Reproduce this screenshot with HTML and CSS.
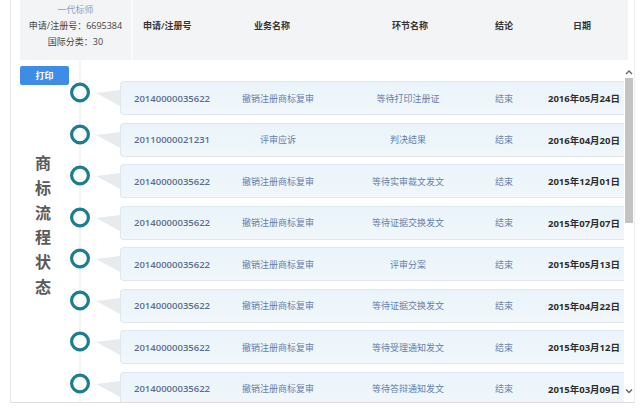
FILE: index.html
```html
<!DOCTYPE html>
<html lang="zh">
<head>
<meta charset="utf-8">
<link rel="stylesheet" href="styles.css">
</head>
<body>
<div class="frame">
  <div class="head">
    <div class="info">
      <div class="brand">一代标师</div>
      <div>申请/注册号：6695384</div>
      <div>国际分类：30</div>
    </div>
    <div class="titles">
      <div class="t t1">申请/注册号</div>
      <div class="t">业务名称</div>
      <div class="t">环节名称</div>
      <div class="t">结论</div>
      <div class="t">日期</div>
    </div>
  </div>
  <div class="main">
    <div class="side">
      <div class="print">打印</div>
      <div class="vtext">商<br>标<br>流<br>程<br>状<br>态</div>
    </div>
    <div class="list">
      <div class="row"><svg class="node" width="51" height="34" viewBox="0 0 51 34"><polygon points="27,12 51,9 51,25" fill="#e7ebee"/><circle cx="11" cy="11.5" r="8.4" fill="#fff" stroke="#1b7d91" stroke-width="3.2"/></svg><div class="card"><span class="c1">20140000035622</span><span class="c2">撤销注册商标复审</span><span class="c3">等待打印注册证</span><span class="c4">结束</span><span class="c5">2016年05月24日</span></div></div>
      <div class="row"><svg class="node" width="51" height="34" viewBox="0 0 51 34"><polygon points="27,12 51,9 51,25" fill="#e7ebee"/><circle cx="11" cy="11.5" r="8.4" fill="#fff" stroke="#1b7d91" stroke-width="3.2"/></svg><div class="card"><span class="c1">20110000021231</span><span class="c2">评审应诉</span><span class="c3">判决结果</span><span class="c4">结束</span><span class="c5">2016年04月20日</span></div></div>
      <div class="row"><svg class="node" width="51" height="34" viewBox="0 0 51 34"><polygon points="27,12 51,9 51,25" fill="#e7ebee"/><circle cx="11" cy="11.5" r="8.4" fill="#fff" stroke="#1b7d91" stroke-width="3.2"/></svg><div class="card"><span class="c1">20140000035622</span><span class="c2">撤销注册商标复审</span><span class="c3">等待实审裁文发文</span><span class="c4">结束</span><span class="c5">2015年12月01日</span></div></div>
      <div class="row"><svg class="node" width="51" height="34" viewBox="0 0 51 34"><polygon points="27,12 51,9 51,25" fill="#e7ebee"/><circle cx="11" cy="11.5" r="8.4" fill="#fff" stroke="#1b7d91" stroke-width="3.2"/></svg><div class="card"><span class="c1">20140000035622</span><span class="c2">撤销注册商标复审</span><span class="c3">等待证据交换发文</span><span class="c4">结束</span><span class="c5">2015年07月07日</span></div></div>
      <div class="row"><svg class="node" width="51" height="34" viewBox="0 0 51 34"><polygon points="27,12 51,9 51,25" fill="#e7ebee"/><circle cx="11" cy="11.5" r="8.4" fill="#fff" stroke="#1b7d91" stroke-width="3.2"/></svg><div class="card"><span class="c1">20140000035622</span><span class="c2">撤销注册商标复审</span><span class="c3">评审分案</span><span class="c4">结束</span><span class="c5">2015年05月13日</span></div></div>
      <div class="row"><svg class="node" width="51" height="34" viewBox="0 0 51 34"><polygon points="27,12 51,9 51,25" fill="#e7ebee"/><circle cx="11" cy="11.5" r="8.4" fill="#fff" stroke="#1b7d91" stroke-width="3.2"/></svg><div class="card"><span class="c1">20140000035622</span><span class="c2">撤销注册商标复审</span><span class="c3">等待证据交换发文</span><span class="c4">结束</span><span class="c5">2015年04月22日</span></div></div>
      <div class="row"><svg class="node" width="51" height="34" viewBox="0 0 51 34"><polygon points="27,12 51,9 51,25" fill="#e7ebee"/><circle cx="11" cy="11.5" r="8.4" fill="#fff" stroke="#1b7d91" stroke-width="3.2"/></svg><div class="card"><span class="c1">20140000035622</span><span class="c2">撤销注册商标复审</span><span class="c3">等待受理通知发文</span><span class="c4">结束</span><span class="c5">2015年03月12日</span></div></div>
      <div class="row"><svg class="node" width="51" height="34" viewBox="0 0 51 34"><polygon points="27,12 51,9 51,25" fill="#e7ebee"/><circle cx="11" cy="11.5" r="8.4" fill="#fff" stroke="#1b7d91" stroke-width="3.2"/></svg><div class="card"><span class="c1">20140000035622</span><span class="c2">撤销注册商标复审</span><span class="c3">等待答辩通知发文</span><span class="c4">结束</span><span class="c5">2015年03月09日</span></div></div>
    </div>
    <div class="scroll">
      <svg class="arrow up" width="10" height="8" viewBox="0 0 10 8"><path d="M2 6 L5 3 L8 6" fill="none" stroke="#666" stroke-width="1.4"/></svg>
      <div class="track"><div class="thumb"></div></div>
      <svg class="arrow" width="10" height="8" viewBox="0 0 10 8"><path d="M2 2.5 L5 5.5 L8 2.5" fill="none" stroke="#666" stroke-width="1.4"/></svg>
    </div>
  </div>
</div>
</body>
</html>
```
FILE: styles.css
```css
html, body {
  margin: 0;
  padding: 0;
  background: #fff;
}
body {
  width: 640px;
  height: 409px;
  overflow: hidden;
  font-family: "Open Sans", "Noto Sans CJK SC", sans-serif;
  font-size: 9px;
  color: #333;
}
.frame {
  margin-left: 10px;
  width: 625px;
  height: 403px;
  border-left: 1px solid #e6e6e6;
  border-right: 1px solid #efefef;
  border-bottom: 1px solid #dedede;
  box-sizing: border-box;
  display: flex;
  flex-direction: column;
}
.head {
  margin-left: 9px;
  width: 608px;
  height: 60px;
  background: #f3f4f5;
  display: flex;
  flex-shrink: 0;
}
.info {
  width: 111px;
  border-right: 2px solid #fafafa;
  text-align: center;
  line-height: 16px;
  padding-top: 2px;
  color: #444;
}
.brand {
  color: #8d9ec2;
}
.titles {
  display: grid;
  grid-template-columns: 61px 156px 120px 68px 88px;
  padding-top: 18px;
  line-height: 16px;
  font-weight: 600;
  color: #333;
}
.t {
  text-align: center;
}
.t1 {
  text-align: left;
  padding-left: 10px;
  white-space: nowrap;
}
.main {
  flex: 1;
  display: flex;
  min-height: 0;
}
.side {
  width: 58px;
  flex-shrink: 0;
}
.print {
  margin: 6px 0 0 9px;
  width: 49px;
  height: 19px;
  line-height: 19px;
  background: #3d8de6;
  border-radius: 2px;
  color: #fff;
  font-weight: 700;
  text-align: center;
  font-size: 9px;
}
.vtext {
  margin-top: 66px;
  padding-left: 6px;
  text-align: center;
  font-size: 16px;
  line-height: 24.8px;
  font-weight: 700;
  color: #5a5a5a;
}
.list {
  flex: 1;
  overflow: hidden;
  padding-top: 21px;
  background: linear-gradient(#f4f4f4, #f4f4f4) no-repeat 10px 0 / 2px 100%;
}
.row {
  display: flex;
  height: 34px;
  margin-bottom: 7.5px;
}
.node {
  flex-shrink: 0;
  display: block;
}
.card {
  flex: 1;
  display: grid;
  grid-template-columns: 66px 156px 104px 88px 71px;
  align-items: center;
  padding-left: 13px;
  background: linear-gradient(#eaf4fa, #f1f7fb);
  border: 1px solid #dfe8ee;
  border-right: none;
  border-radius: 4px 0 0 4px;
  white-space: nowrap;
  color: #6480ab;
}
.c1 {
  color: #5a6c90;
  font-weight: 600;
  font-size: 9.5px;
}
.c2, .c3, .c4 {
  text-align: center;
}
.c4 {
  color: #6d86ad;
}
.c5 {
  text-align: right;
  padding-right: 1px;
  font-weight: 700;
  font-size: 9.5px;
  color: #2e2e2e;
}
.scroll {
  width: 10px;
  flex-shrink: 0;
  display: flex;
  flex-direction: column;
  align-items: center;
  padding-top: 8px;
}
.arrow {
  display: block;
  flex-shrink: 0;
}
.track {
  flex: 1;
  width: 8px;
  padding-top: 2px;
}
.thumb {
  width: 8px;
  height: 145px;
  background: #c3c3c3;
}
.scroll .arrow:last-child {
  margin-bottom: 7px;
}
```
